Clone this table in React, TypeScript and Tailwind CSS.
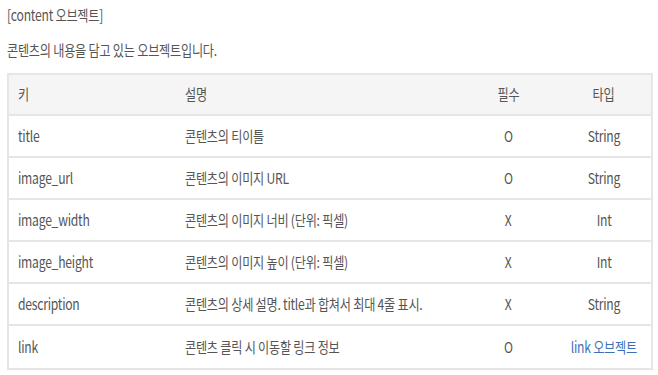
import React from "react";

const rows: { k: string; d: string; r: string; t: string; link?: boolean }[] = [
  { k: "title", d: "콘텐츠의 티이틀", r: "O", t: "String" },
  { k: "image_url", d: "콘텐츠의 이미지 URL", r: "O", t: "String" },
  { k: "image_width", d: "콘텐츠의 이미지 너비 (단위: 픽셀)", r: "X", t: "Int" },
  { k: "image_height", d: "콘텐츠의 이미지 높이 (단위: 픽셀)", r: "X", t: "Int" },
  { k: "description", d: "콘텐츠의 상세 설명. title과 합쳐서 최대 4줄 표시.", r: "X", t: "String" },
  { k: "link", d: "콘텐츠 클릭 시 이동할 링크 정보", r: "O", t: "link 오브젝트", link: true },
];

function L({ children }: { children: React.ReactNode }) {
  return <span className="inline-block whitespace-nowrap origin-left scale-x-[0.81]">{children}</span>;
}
function C({ children }: { children: React.ReactNode }) {
  return <span className="inline-block whitespace-nowrap origin-center scale-x-[0.81]">{children}</span>;
}

export default function App() {
  return (
    <div
      className="w-[658px] h-[375px] bg-white text-[#555] text-[15px] overflow-hidden"
      style={{ fontFamily: '"Noto Sans CJK KR", "Noto Sans", sans-serif' }}
    >
      <div className="px-[7px] pt-[4px]">
        <div className="h-[22px] leading-[22px] tracking-[-0.3px]"><L>[content 오브젝트]</L></div>
        <div className="mt-[13px] h-[22px] leading-[22px] tracking-[-0.3px]"><L>콘텐츠의 내용을 담고 있는 오브젝트입니다.</L></div>
        <div className="mt-[12px] w-[646px] border-2 border-[#e6e6e6]">
          <div className="flex h-[41px] items-center bg-[#f5f5f5] border-b-2 border-[#e6e6e6] tracking-[-0.3px]">
            <div className="w-[166px] pl-[9px]"><L>키</L></div>
            <div className="w-[285px] pl-[10px]"><L>설명</L></div>
            <div className="w-[97px] text-center"><C>필수</C></div>
            <div className="flex-1 text-center"><C>타입</C></div>
          </div>
          {rows.map((r, i) => (
            <div
              key={r.k}
              className={`flex h-[42px] items-center tracking-[-0.3px] pt-[1px] ${i < rows.length - 1 ? "border-b-2 border-[#e6e6e6]" : ""}`}
            >
              <div className="w-[166px] pl-[9px]"><L>{r.k}</L></div>
              <div className="w-[285px] pl-[10px]"><L>{r.d}</L></div>
              <div className="w-[97px] text-center"><C>{r.r}</C></div>
              <div className={`flex-1 text-center ${r.link ? "text-[#3d6fb6]" : ""}`}><C>{r.t}</C></div>
            </div>
          ))}
        </div>
      </div>
    </div>
  );
}
